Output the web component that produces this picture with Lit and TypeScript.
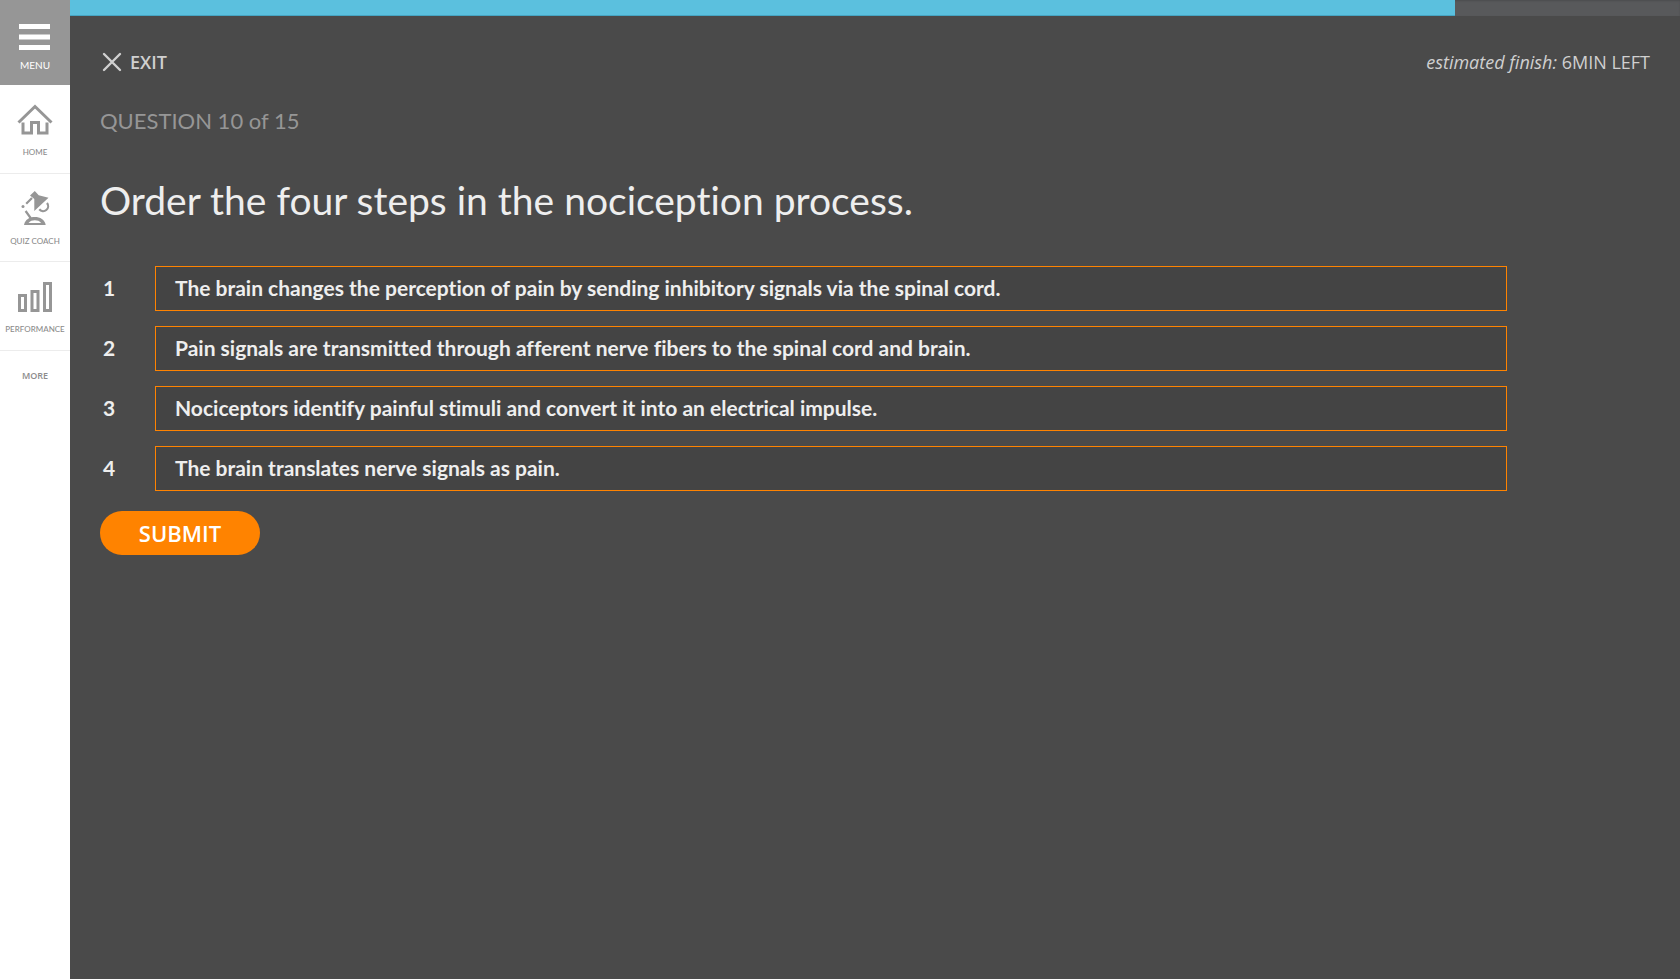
import { LitElement, html, css, svg } from "lit";
import { customElement, state, property } from "lit/decorators.js";

const homeIcon = svg`
  <svg width="36" height="32" viewBox="0 0 36 32" fill="none" stroke="#969696" aria-hidden="true">
    <path d="M1.500 18.500 18 2.500 34.500 18.500" stroke-width="3"/>
    <path d="M6 18.500V29H14.500V18.500H21.500V29H30V18.500" stroke-width="3"/>
  </svg>`;

const lampIcon = svg`
  <svg width="30" height="36" viewBox="0 0 30 36" aria-hidden="true">
    <path d="M10 4.500 14.800 0 18.700 4.200 28.500 6.700 14.300 20 14.300 8Z" fill="#969696"/>
    <path d="M27 12A4.800 4.800 0 0 1 19.300 18.300" fill="none" stroke="#969696" stroke-width="2.200"/>
    <path d="M12 7 6.200 12.800M5.600 20 11 27.500" fill="none" stroke="#969696" stroke-width="2.200"/>
    <circle cx="3" cy="15.600" r="1.500" fill="#969696"/>
    <path d="M4 34C5 28.500 9.500 26 14.800 26S24.700 28.500 25.700 34Z" fill="#969696"/>
    <path d="M8.500 32C10 30 12.500 29.300 14.800 29.300S19.700 30 21.200 32Z" fill="#fff"/>
  </svg>`;

const barsIcon = svg`
  <svg width="34" height="32" viewBox="0 0 34 32" fill="none" stroke="#969696" stroke-width="3" aria-hidden="true">
    <path d="M1.500 14.500H7.500V29.500H1.500ZM14 10.500H20V29.500H14ZM26.500 2.500H32.500V29.500H26.500Z"/>
  </svg>`;

@customElement("side-nav")
export class SideNav extends LitElement {
  static styles = css`
    :host { display: block; background: #fff; color: #8c8c8c; font-family: Lato, sans-serif; }
    .menu, .link {
      display: flex; flex-direction: column; align-items: center;
      box-sizing: border-box; width: 100%; text-transform: uppercase;
    }
    .menu {
      height: 85px; padding: 24px 0 0; gap: 6px; border: 0; background: #969696;
      color: #fff; font: 10px/14px Lato, sans-serif; cursor: pointer;
    }
    .link {
      height: 88px; padding-top: 17px; gap: 7px; border-bottom: 1px solid #ececec;
      color: inherit; text-decoration: none; font-size: 8px; line-height: 14px; font-weight: 500;
    }
    .icon { display: flex; height: 36px; align-items: center; }
    .first { height: 89px; }
    .more {
      display: block; padding-top: 18px; text-align: center; color: inherit;
      text-decoration: none; font: 600 9px/14px "Open Sans", sans-serif;
    }
  `;
  render() {
    return html`
      <nav aria-label="Main">
        <button class="menu" type="button">
          <svg width="32" height="28" viewBox="0 0 32 28" fill="#fff" aria-hidden="true">
            <path d="M0 0H31V5H0ZM0 10.500H31V15.500H0ZM0 21H31V26H0Z"/>
          </svg>
          Menu
        </button>
        <a class="link first" href="#home"><span class="icon">${homeIcon}</span>Home</a>
        <a class="link" href="#coach"><span class="icon">${lampIcon}</span>Quiz Coach</a>
        <a class="link first" href="#performance"><span class="icon">${barsIcon}</span>Performance</a>
        <a class="more" href="#more">MORE</a>
      </nav>`;
  }
}

@customElement("quiz-progress")
export class QuizProgress extends LitElement {
  @property({ type: Number }) value = 0;
  static styles = css`
    :host { display: block; height: 16px; background: #58595b; box-shadow: inset 0 1px 2px rgba(0, 0, 0, 0.15); }
    .fill { height: 100%; box-sizing: border-box; background: #5bc0de; border-bottom: 1px solid #46a5c3; }
  `;
  render() {
    return html`<div class="fill" role="progressbar" aria-label="Quiz progress"
      aria-valuenow=${this.value} style="width:${this.value}%"></div>`;
  }
}

@customElement("app-root")
export class AppRoot extends LitElement {
  @state() private steps = [
    "The brain changes the perception of pain by sending inhibitory signals via the spinal cord.",
    "Pain signals are transmitted through afferent nerve fibers to the spinal cord and brain.",
    "Nociceptors identify painful stimuli and convert it into an electrical impulse.",
    "The brain translates nerve signals as pain.",
  ];
  static styles = css`
    :host {
      display: grid; grid-template-columns: 70px minmax(0, 1fr); min-height: 100vh;
      background: #4a4a4a; color: #eee; font-family: Lato, "Open Sans", sans-serif;
      font-variant-ligatures: no-common-ligatures;
    }
    .content { padding: 32px 30px; }
    .top { display: flex; justify-content: space-between; align-items: center; color: #d0d0d0; }
    .exit {
      display: flex; align-items: center; gap: 8px; padding: 0 0 0 2px; border: 0; background: none;
      color: inherit; font: 600 18px/28px "Open Sans", sans-serif; cursor: pointer;
    }
    .time { font: 18px/28px "Open Sans", sans-serif; }
    .count { margin: 29px 0 0; font-size: 22px; line-height: 32px; color: #969696; }
    h1 { margin: 35px 0 0; font-size: 39px; line-height: 56px; font-weight: 400; }
    .answers { display: grid; grid-template-columns: 11fr 1fr; column-gap: 15px; }
    .steps { display: grid; row-gap: 15px; margin: 38px 0 0; padding: 0; list-style: none; }
    .step { display: flex; align-items: center; font-size: 21px; line-height: 27px; font-weight: 700; }
    .number { box-sizing: border-box; width: 55px; padding: 0 0 2px 3px; }
    .answer { flex: 1; padding: 7px 19px 9px; border: 1px solid #ff8300; background: #444; cursor: move; }
    .submit {
      display: block; margin-top: 20px; width: 160px; height: 44px; border: 0; border-radius: 22px;
      padding: 0; background: #ff8300; color: #fff; font: 600 22px/44px "Open Sans", sans-serif; cursor: pointer;
    }
  `;
  render() {
    return html`
      <side-nav></side-nav>
      <main>
        <quiz-progress .value=${86}></quiz-progress>
        <div class="content">
          <div class="top">
            <button class="exit" type="button">
              <svg width="20" height="20" viewBox="0 0 20 20" stroke="#d0d0d0" stroke-width="2.400" stroke-linecap="round" aria-hidden="true">
                <path d="M2 2 18 18M18 2 2 18"/>
              </svg>
              EXIT
            </button>
            <div class="time"><em>estimated finish:</em> 6MIN LEFT</div>
          </div>
          <p class="count">QUESTION 10 of 15</p>
          <h1>Order the four steps in the nociception process.</h1>
          <div class="answers">
            <ol class="steps">
              ${this.steps.map((text, i) => html`
                <li class="step"><span class="number">${i + 1}</span><div class="answer">${text}</div></li>`)}
            </ol>
          </div>
          <button class="submit" type="button">SUBMIT</button>
        </div>
      </main>`;
  }
}
